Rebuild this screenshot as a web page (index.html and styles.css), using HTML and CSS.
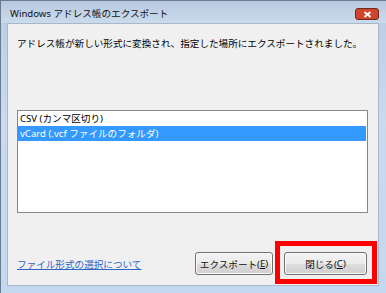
FILE: index.html
```html
<!doctype html>
<html lang="ja">
<head>
  <meta charset="UTF-8">
  <title>Windows アドレス帳のエクスポート</title>
  <link rel="stylesheet" href="styles.css">
</head>
<body>
  <div class="window">
    <div class="titlebar">
      <div class="title">Windows アドレス帳のエクスポート</div>
      <div class="btn-close">
        <svg class="close-icon" width="9" height="7" viewBox="0 0 9 7">
          <path d="M1.5 1 L7.5 6 M7.5 1 L1.5 6" stroke="#ffffff" stroke-width="1.8"/>
        </svg>
      </div>
    </div>
    <div class="frame">
      <div class="content">
        <p class="message">アドレス帳が新しい形式に変換され、指定した場所にエクスポートされました。</p>
        <ul class="listbox">
          <li class="item">CSV (カンマ区切り)</li>
          <li class="item selected">vCard (.vcf ファイルのフォルダ)</li>
        </ul>
        <div class="footer">
          <a class="link" href="#">ファイル形式の選択について</a>
          <div class="buttons">
            <div class="btn">エクスポート(<u>E</u>)</div>
            <div class="btn btn-highlighted">閉じる(<u>C</u>)</div>
          </div>
        </div>
      </div>
    </div>
  </div>
</body>
</html>
```

FILE: styles.css
```css
html, body {
    margin: 0;
    padding: 0;
}

body {
    font-family: "Noto Sans", "Noto Sans CJK JP", sans-serif;
    font-size: 9.6px;
    color: #000;
}

.window {
    width: 386px;
    height: 293px;
    box-sizing: border-box;
    border-left: 1px solid #6a7b90;
    border-top: 1px solid #6a7b90;
    background: linear-gradient(to bottom, #b9cde4 0%, #c9daee 40%, #c4d8ef 100%);
    display: flex;
    flex-direction: column;
}

.titlebar {
    height: 22px;
    display: flex;
    justify-content: space-between;
    align-items: flex-start;
    background: linear-gradient(to bottom, #b7c9de, #cbdbed);
}

.title {
    padding: 5px 0 0 9px;
    line-height: 16px;
    color: #111;
}

.btn-close {
    flex: none;
    margin: 7px 7px 0 0;
    width: 24px;
    height: 12px;
    box-sizing: border-box;
    border: 1px solid #6e2a1e;
    border-radius: 3px;
    background: #d0442c;
    display: flex;
    align-items: center;
    justify-content: center;
}

.close-icon {
    display: block;
}

.frame {
    flex: 1;
    display: flex;
    padding: 0 7px 7px 6px;
}

.content {
    flex: 1;
    background: #f0f0f0;
    display: flex;
    flex-direction: column;
    padding: 12px 10px 10px 9px;
    border: 1px solid #a9b8c9;
}

.message {
    margin: 0;
    line-height: 16px;
}

.listbox {
    list-style: none;
    margin: 58px 0 0 0;
    padding: 0;
    height: 103px;
    box-sizing: border-box;
    border: 1px solid #828790;
    background: #fff;
}

.item {
    line-height: 15px;
    height: 15px;
    padding-left: 2px;
    margin-right: 1px;
}

.item.selected {
    background: #3399ff;
    color: #fff;
}

.footer {
    margin-top: auto;
    display: flex;
    align-items: center;
    justify-content: space-between;
}

.link {
    color: #2e64c8;
    text-decoration: underline;
    margin-top: 1px;
}

.buttons {
    display: flex;
    gap: 11px;
    margin-right: 1px;
}

.btn {
    position: relative;
    width: 78px;
    height: 23px;
    box-sizing: border-box;
    border: 1px solid #707070;
    border-radius: 3px;
    background: linear-gradient(to bottom, #f3f3f3 0%, #ebebeb 50%, #dddddd 51%, #cfcfcf 100%);
    box-shadow: inset 0 0 0 1px #fbfbfb;
    display: flex;
    align-items: center;
    justify-content: center;
    color: #111;
}

.btn-highlighted {
    width: 83px;
}

.btn-highlighted::after {
    content: "";
    position: absolute;
    top: -12px;
    left: -10px;
    right: -11px;
    bottom: -10px;
    border: 5px solid #ff0000;
}
```
